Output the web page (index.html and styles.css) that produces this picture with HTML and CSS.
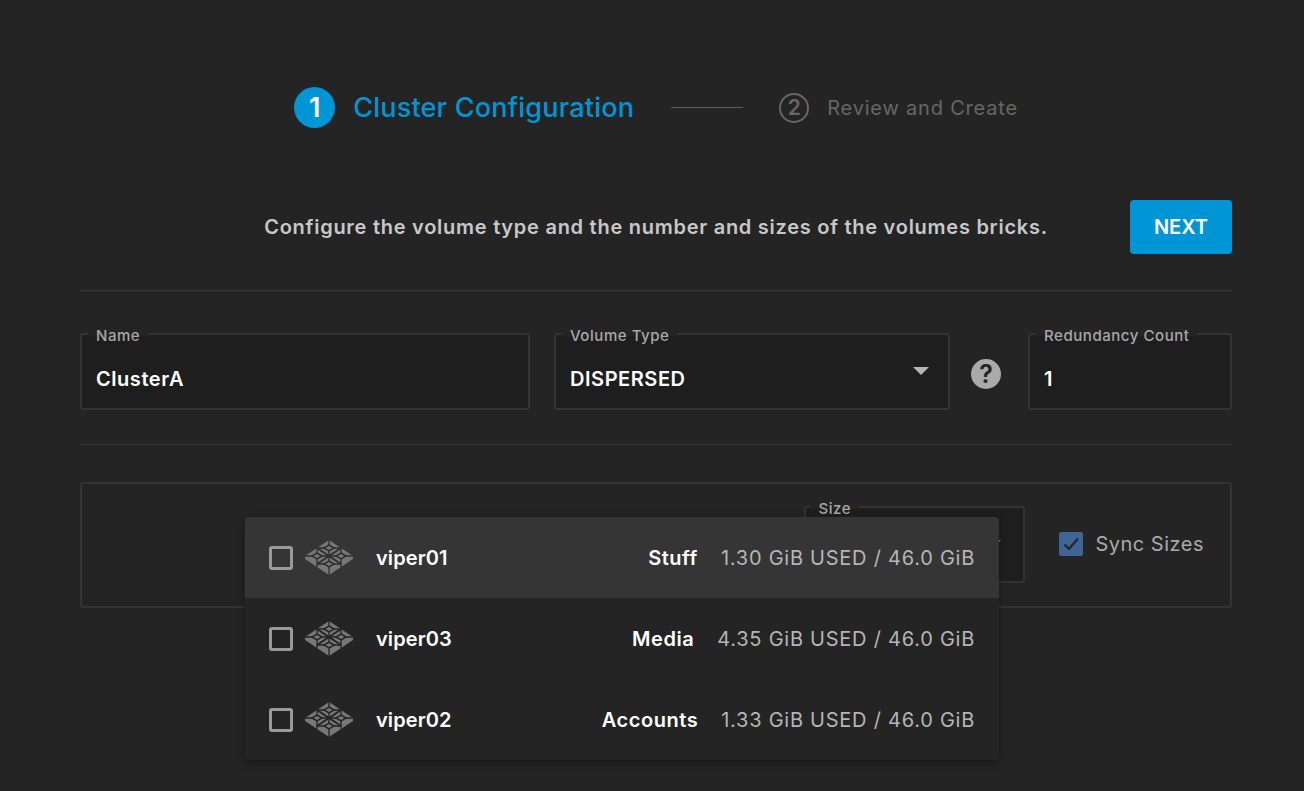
FILE: index.html
```html
<!DOCTYPE html>
<html lang="en">
<head>
<meta charset="utf-8">
<title>Cluster Configuration</title>
<link rel="stylesheet" href="styles.css">
</head>
<body>
<svg class="defs" width="0" height="0" aria-hidden="true">
  <symbol id="brick" viewBox="0 0 48 35">
    <path class="b-base" d="M24 0 48 16V19L24 35 0 19V16Z"/>
    <path class="b-line" d="M12 8 36 24M36 8 12 24"/>
    <path class="b-thin" d="M24 0V5M24 11V21M24 27V35M12 8H19M29 8H36M0 16H7M17 16H31M41 16H48M12 8V13M12 19V27M36 8V13M36 19V27M12 24H19M29 24H36"/>
    <path class="b-tile" d="M24 5 29 8 24 11 19 8ZM12 13 17 16 12 19 7 16ZM36 13 41 16 36 19 31 16ZM24 21 29 24 24 27 19 24Z"/>
  </symbol>
</svg>
<main class="page">
  <nav class="stepper">
    <span class="step-num">1</span>
    <span class="step-title">Cluster Configuration</span>
    <span class="step-line"></span>
    <span class="step-num-off">2</span>
    <span class="step-title-off">Review and Create</span>
  </nav>
  <header class="intro">
    <span></span>
    <p class="intro-text">Configure the volume type and the number and sizes of the volumes bricks.</p>
    <button class="next">NEXT</button>
  </header>
  <section class="fields">
    <div class="field name"><label class="field-label">Name</label><span class="field-value">ClusterA</span></div>
    <div class="field type"><label class="field-label">Volume Type</label><span class="field-value">DISPERSED</span><span class="caret"></span></div>
    <span class="help">?</span>
    <div class="field count"><label class="field-label">Redundancy Count</label><span class="field-value">1</span></div>
  </section>
  <section class="card">
    <div class="field size"><label class="field-label">Size</label><span class="caret"></span></div>
    <label class="sync">
      <span class="sync-box"><svg viewBox="0 0 24 24" width="24" height="24"><path d="M5.500 12.500 10 17 19 6.500"/></svg></span>
      <span>Sync Sizes</span>
    </label>
    <ul class="menu">
      <li class="menu-row active">
        <span class="check"></span>
        <svg class="brick" width="48" height="35"><use href="#brick"/></svg>
        <span class="host">viper01</span>
        <span class="vol">Stuff</span>
        <span class="cap">1.30 GiB USED / 46.0 GiB</span>
      </li>
      <li class="menu-row">
        <span class="check"></span>
        <svg class="brick" width="48" height="35"><use href="#brick"/></svg>
        <span class="host">viper03</span>
        <span class="vol">Media</span>
        <span class="cap">4.35 GiB USED / 46.0 GiB</span>
      </li>
      <li class="menu-row">
        <span class="check"></span>
        <svg class="brick" width="48" height="35"><use href="#brick"/></svg>
        <span class="host">viper02</span>
        <span class="vol">Accounts</span>
        <span class="cap">1.33 GiB USED / 46.0 GiB</span>
      </li>
    </ul>
  </section>
</main>
</body>
</html>
```
FILE: styles.css
```css
* { box-sizing: border-box; }
html, body { margin: 0; height: 100%; }
body {
  background: #242424;
  color: #fff;
  font-family: Inter, "Liberation Sans", sans-serif;
  overflow: hidden;
}
.defs { position: absolute; }
.page { padding: 87px 72px 0 80px; }

.stepper { display: flex; align-items: center; justify-content: center; height: 41px; }
.step-num {
  width: 41px; height: 41px; border-radius: 50%;
  background: #0095d5; color: #fff;
  display: flex; align-items: center; justify-content: center;
  font-size: 27px; font-weight: 600;
  margin-right: 18px;
}
.step-title { font-size: 27px; font-weight: 500; letter-spacing: .22px; color: #0095d5; margin-right: 37px; }
.step-line { width: 72px; height: 1px; background: #5c5c5c; margin-right: 36px; }
.step-num-off {
  width: 30px; height: 30px; border-radius: 50%;
  border: 2px solid #666; color: #666;
  display: flex; align-items: center; justify-content: center;
  font-size: 21px; font-weight: 600;
  margin-right: 18px;
}
.step-title-off { font-size: 20px; letter-spacing: .8px; color: #666; }

.intro {
  display: grid; grid-template-columns: 1fr auto 1fr; align-items: center;
  margin-top: 72px; padding-bottom: 36px;
  border-bottom: 1px solid #383838;
}
.intro-text { margin: 0; font-size: 20px; font-weight: 600; letter-spacing: .735px; color: #c8c8c8; white-space: nowrap; }
.next {
  justify-self: end;
  width: 102px; height: 54px;
  border: 0; border-radius: 4px;
  background: #0095d5; color: #fff;
  font: 600 20px Inter, "Liberation Sans", sans-serif;
}

.fields {
  display: flex;
  align-items: center;
  margin-top: 42px; padding-bottom: 34px;
  border-bottom: 1px solid #383838;
}
.field {
  position: relative;
  height: 77px;
  background: #1e1e1e;
  border: 2px solid #333;
  border-radius: 3px;
  display: flex; align-items: center;
  padding: 15px 14px 0;
}
.name { width: 450px; margin-right: 24px; }
.type { width: 396px; }
.count { width: 204px; }
.field-label {
  position: absolute; left: 6px; top: -8px;
  padding: 0 8px;
  font-size: 15px; font-weight: 500; line-height: 18px; letter-spacing: .55px;
  color: #a8a8a8;
  background: linear-gradient(#242424 50%, #1e1e1e 50%);
}
.field-value { font-size: 20px; font-weight: 600; letter-spacing: .55px; color: #fff; }
.caret {
  position: absolute; right: 19px; top: 32px;
  width: 0; height: 0;
  border-left: 8px solid transparent;
  border-right: 8px solid transparent;
  border-top: 8px solid #b5b5b5;
}
.size .caret { right: 22px; border-left-width: 7px; border-right-width: 7px; border-top-width: 7px; border-top-color: #8a8a8a; }
.help {
  flex: none;
  width: 30px; height: 30px; border-radius: 50%;
  background: #aaa; color: #242424;
  display: flex; align-items: center; justify-content: center;
  font-size: 25px; font-weight: 600;
  margin: 4px 27px 0 21px;
}

.card {
  position: relative;
  height: 126px;
  margin-top: 37px;
  border: 2px solid #333;
  border-radius: 3px;
  display: flex; align-items: center; justify-content: flex-end;
  padding-right: 26px;
}
.size { width: 221px; margin-right: 34px; align-self: flex-start; margin-top: 22px; }
.size .field-label { left: 4px; }
.sync { display: flex; align-items: center; gap: 12px; font-size: 20px; letter-spacing: .5px; color: #aaa; margin-top: -2px; }
.sync-box {
  width: 24px; height: 24px; border-radius: 2px;
  background: #3f6593;
  display: block;
}
.sync-box svg { display: block; }
.sync-box path { fill: none; stroke: #1d2530; stroke-width: 2.200; }

.menu {
  position: absolute; left: 163px; top: 33px;
  width: 754px; margin: 0; padding: 0;
  list-style: none;
  background: #242424;
  border-radius: 4px;
  box-shadow: 0 3px 10px rgba(0,0,0,.3);
  overflow: hidden;
}
.menu-row {
  --row: #242424;
  height: 81px;
  display: flex; align-items: center;
  padding: 0 24px 0 24px;
  font-size: 20px;
}
.menu-row.active { --row: #2e2e2e; background: #353535; }
.check {
  width: 24px; height: 24px; flex: none;
  border: 3px solid #9a9a9a; border-radius: 3px;
  margin-right: 12px;
}
.brick { flex: none; margin-right: 23px; }
.b-base { fill: #777; }
.b-line { fill: none; stroke: var(--row); stroke-width: 2; }
.b-thin { fill: none; stroke: var(--row); stroke-width: 1.300; }
.b-tile { fill: #777; stroke: var(--row); stroke-width: 1.500; }
.host { font-weight: 600; letter-spacing: .1px; color: #fff; margin-right: auto; }
.vol { font-weight: 600; letter-spacing: .55px; color: #fff; margin-right: 23px; }
.cap { color: #b5b5b5; letter-spacing: .75px; }
```
